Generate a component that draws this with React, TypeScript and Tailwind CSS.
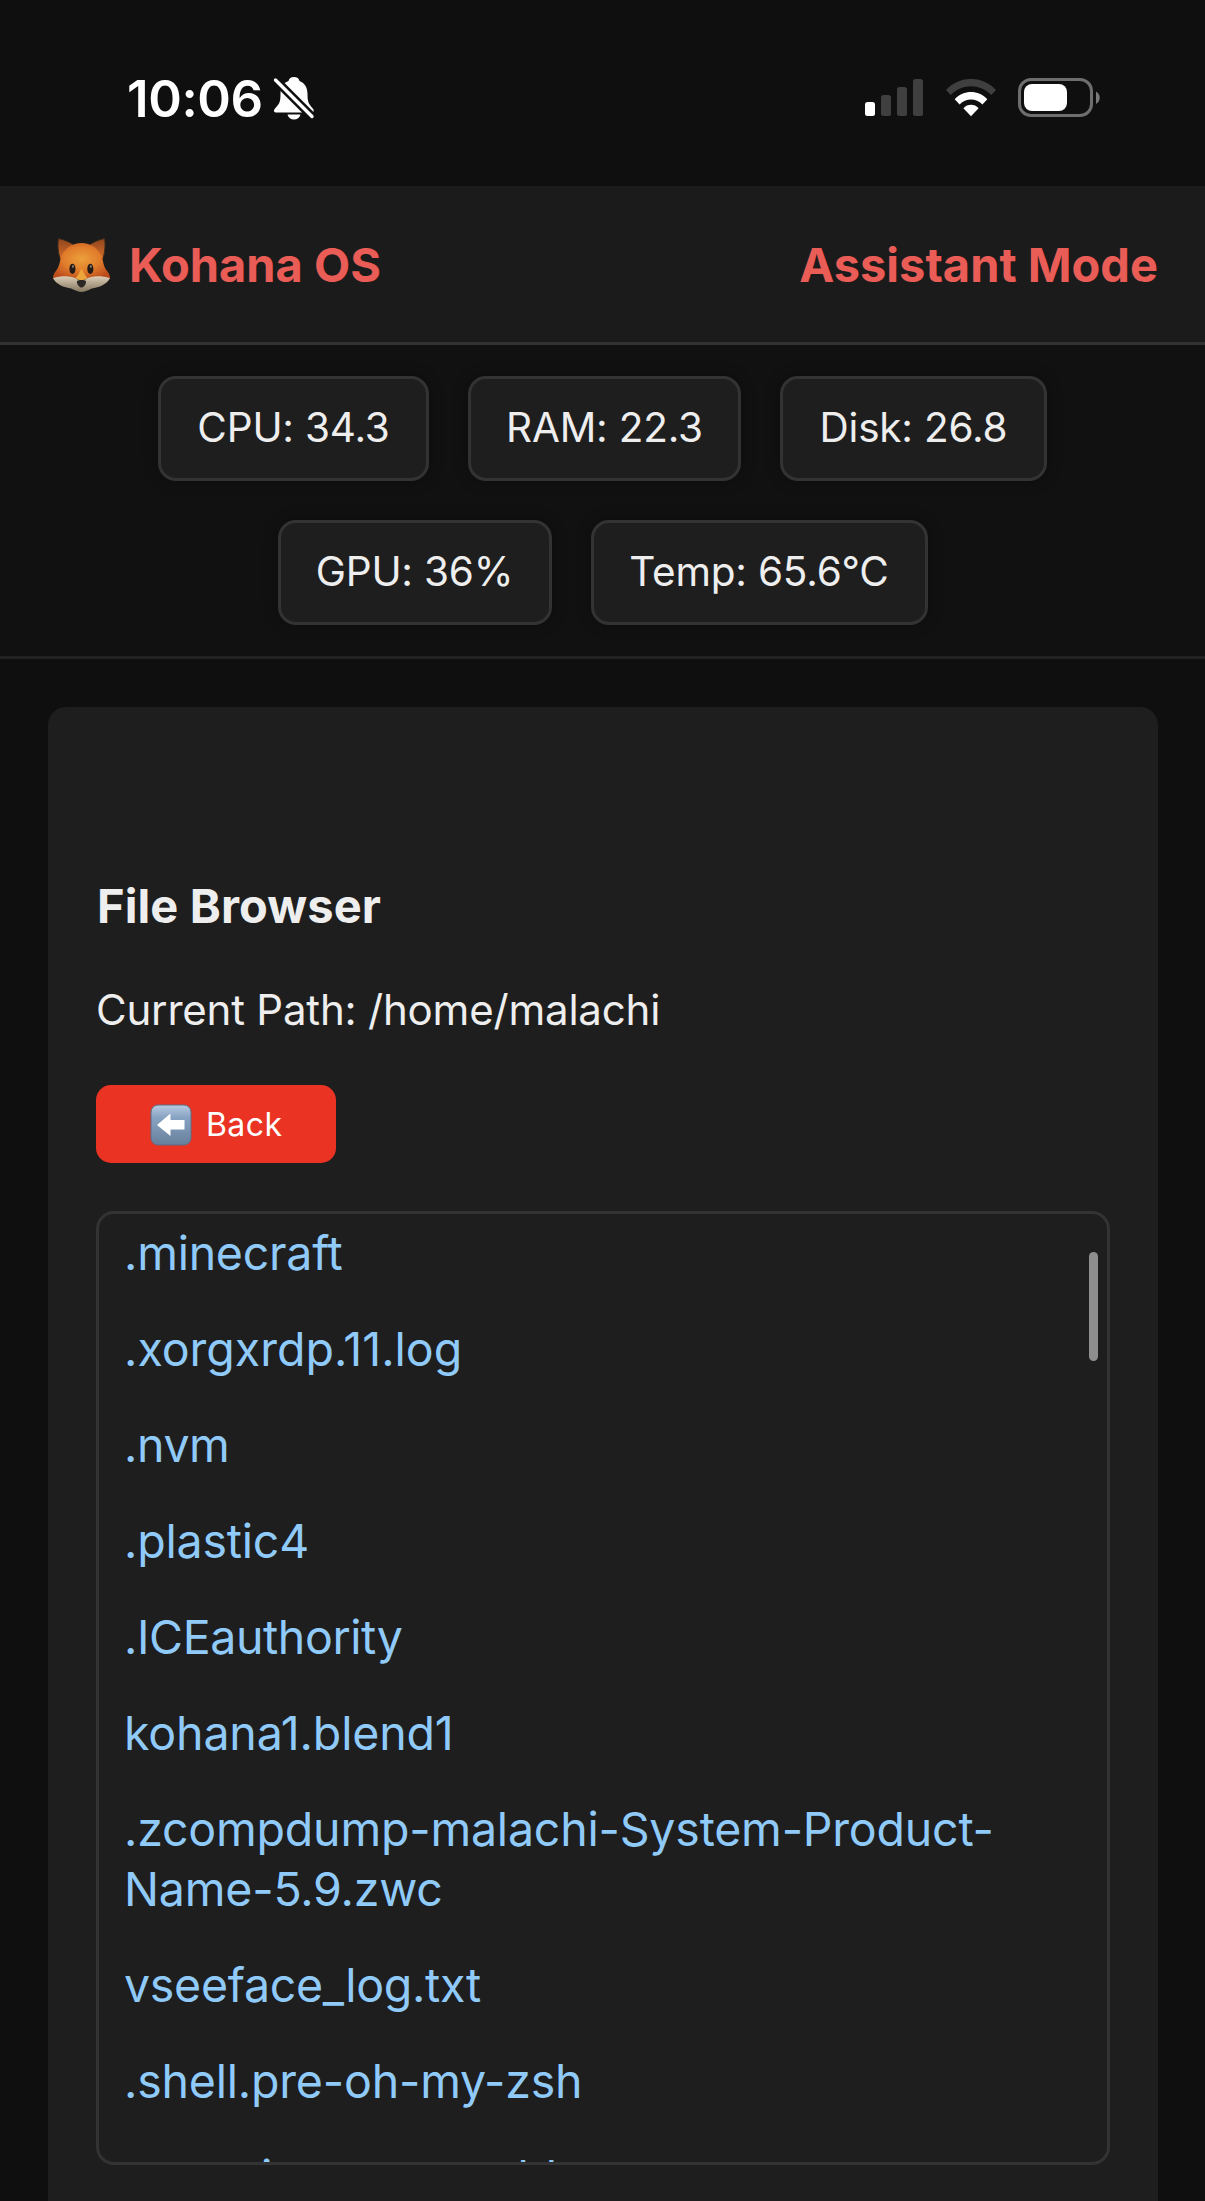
import React from "react";

const files = [
  { name: ".minecraft", tracking: "tracking-[-0.25px]" },
  { name: ".xorgxrdp.11.log", tracking: "tracking-[0px]" },
  { name: ".nvm", tracking: "tracking-[-0.4px]" },
  { name: ".plastic4", tracking: "tracking-[-0.2px]" },
  { name: ".ICEauthority", tracking: "tracking-[-0.4px]" },
  { name: "kohana1.blend1", tracking: "tracking-[-0.15px]" },
  { name: ".zcompdump-malachi-System-Product-Name-5.9.zwc", tracking: "tracking-[-0.2px]" },
  { name: "vseeface_log.txt", tracking: "tracking-[-0.3px]" },
  { name: ".shell.pre-oh-my-zsh", tracking: "tracking-[-0.2px]" },
  { name: ".xsession-errors.old", tracking: "tracking-[-0.4px]" },
];

const stats = [
  { text: "CPU: 34.3", width: "w-[271px]" },
  { text: "RAM: 22.3", width: "w-[273px]" },
  { text: "Disk: 26.8", width: "w-[267px]" },
  { text: "GPU: 36%", width: "w-[274px]" },
  { text: "Temp: 65.6°C", width: "w-[337px]" },
];

function BellOff() {
  return (
    <svg className="-mt-px ml-[10px] h-[44px] w-[42px]" viewBox="0 0 42 44">
      <path
        d="M21 1c-3 0-5 1.600-5.500 4C9.500 7 7.500 12 7.500 18c0 9-1.500 10-5.500 14.500-2 2.500-.8 4 1.500 4h35c2.300 0 3-2 1.300-4C36 28 34.500 27 34.500 18c0-6-2.500-11-8-13C26 2.600 24 1 21 1z"
        fill="#fff"
      />
      <path d="M14.500 38.500h13c-.8 3.200-3.500 5-6.500 5s-5.700-1.800-6.500-5z" fill="#fff" />
      <path d="M1 2.500 39 40.500" stroke="#0f0f0f" strokeWidth="8.500" strokeLinecap="butt" />
      <path d="M2.500 4 39 40.500" stroke="#fff" strokeWidth="3.400" strokeLinecap="round" />
    </svg>
  );
}

function Signal() {
  return (
    <svg className="h-[38px] w-[60px]" viewBox="0 0 60 38">
      <rect x="1" y="23" width="10" height="14" rx="2.500" fill="#fff" />
      <rect x="17" y="16" width="10" height="21" rx="2.500" fill="#3f3f3f" />
      <rect x="33" y="8" width="10" height="29" rx="2.500" fill="#3f3f3f" />
      <rect x="49" y="0" width="10" height="37" rx="2.500" fill="#3f3f3f" />
    </svg>
  );
}

function Wifi() {
  return (
    <svg className="h-[38px] w-[52px]" viewBox="0 0 52 38">
      <path d="M1 11C15-3.700 37-3.700 51 11L46.300 16C35 4.300 17 4.300 5.700 16z" fill="#3f3f3f" />
      <path d="M9.700 20.200c9-9.700 23.600-9.700 32.600 0L37.400 25.400c-6.300-6.500-16.500-6.500-22.800 0z" fill="#fff" />
      <path d="M18.400 29.200c4-4.600 11.200-4.600 15.200 0L26 37.200z" fill="#fff" />
    </svg>
  );
}

function Battery() {
  return (
    <svg className="h-[40px] w-[84px]" viewBox="0 0 84 40">
      <rect x="2.500" y="1.500" width="72" height="36" rx="11.500" fill="none" stroke="#6e6e6e" strokeWidth="3" />
      <rect x="7" y="6" width="43" height="27" rx="8" fill="#fff" />
      <path d="M79 13.500c5 2.500 5 10 0 12.500z" fill="#7a7a7a" />
    </svg>
  );
}

function Fox() {
  return (
    <svg className="mt-px h-[55px] w-[59px]" viewBox="0 0 60 56">
      <defs>
        <radialGradient id="face" cx="0.500" cy="0.450" r="0.600">
          <stop offset="0" stopColor="#eca03a" />
          <stop offset="0.550" stopColor="#e07c2b" />
          <stop offset="1" stopColor="#bd4c1c" />
        </radialGradient>
        <linearGradient id="ear" x1="0" y1="0" x2="0" y2="1">
          <stop offset="0" stopColor="#8f451d" />
          <stop offset="1" stopColor="#d9702a" />
        </linearGradient>
        <linearGradient id="muzzle" x1="0" y1="0" x2="0" y2="1">
          <stop offset="0" stopColor="#dccdb6" />
          <stop offset="1" stopColor="#857660" />
        </linearGradient>
      </defs>
      <path d="M6.500 1.500C13 3 19 5.500 23 9L9 24C6 17 5.500 8 6.500 1.500z" fill="url(#ear)" stroke="#3a2a1c" strokeWidth="1" />
      <path d="M53.500 1.500C47 3 41 5.500 37 9L51 24C54 17 54.500 8 53.500 1.500z" fill="url(#ear)" stroke="#3a2a1c" strokeWidth="1" />
      <path d="M30 6c10 0 18 6 21 15 1.500 6 2 10 5.500 14 2 2.500 2.500 5 2.500 7.500H1C1 40 1.500 37.500 3.500 35c3.500-4 4-8 5.500-14C12 12 20 6 30 6z" fill="url(#face)" />
      <path d="M1 42c9-3 19-2.500 24 .5 1.500 1 3 1.500 5 1.500s3.500-.5 5-1.500c5-3 15-3.500 24-.5-3 6-11 9.500-18.500 10.500C36 54.800 33 56 30 56s-6-1.200-10.500-3.500C12 51.500 4 48 1 42z" fill="url(#muzzle)" />
      <path d="M30 32c-2 4-3.500 7-6 9.500 2 2 4 2.500 6 2.500s4-.5 6-2.500c-2.500-2.500-4-5.500-6-9.500z" fill="#eda63c" />
      <path d="M25.500 45c1.500-1.500 7.500-1.500 9 0 1 2-2.500 6.500-4.500 6.500S24.500 47 25.500 45z" fill="#2b2724" />
      <ellipse cx="20.800" cy="32.500" rx="3.100" ry="5.200" fill="#241a16" />
      <ellipse cx="39" cy="32.500" rx="3.100" ry="5.200" fill="#241a16" />
      <ellipse cx="21.300" cy="30" rx="1" ry="1.500" fill="#8a7a70" />
      <ellipse cx="39.500" cy="30" rx="1" ry="1.500" fill="#8a7a70" />
    </svg>
  );
}

function BackArrow() {
  return (
    <svg className="mt-px h-[42px] w-[42px]" viewBox="0 0 42 42">
      <defs>
        <linearGradient id="key" x1="0" y1="0" x2="0" y2="1">
          <stop offset="0" stopColor="#b9cbe0" />
          <stop offset="0.300" stopColor="#89a4c4" />
          <stop offset="1" stopColor="#667f9b" />
        </linearGradient>
      </defs>
      <rect x="1" y="1" width="40" height="40" rx="7" fill="url(#key)" stroke="#5d6f86" strokeWidth="1" />
      <path d="M7 21 20.500 9.500V16H34.500v9.500H20.500V32z" fill="#fff" />
    </svg>
  );
}

export default function App() {
  return (
    <div className="flex h-[2201px] w-[1205px] flex-col overflow-hidden bg-[#0f0f0f] font-['Inter',sans-serif] text-[#eeeeee]">
      <div className="flex h-[186px] shrink-0 items-start justify-between pt-[76px] pr-[104px] pl-[127px]">
        <div className="flex h-[44px] items-center">
          <span className="pt-px text-[51px] leading-[44px] font-semibold tracking-[-0.4px] text-white">10:06</span>
          <BellOff />
        </div>
        <div className="flex items-start pt-[3px]">
          <Signal />
          <div className="ml-[21px]"><Wifi /></div>
          <div className="ml-[20px] -mt-px"><Battery /></div>
        </div>
      </div>

      <header className="flex h-[159px] shrink-0 items-center justify-between border-b-[3px] border-[#333333] bg-[#1b1b1b] px-[48px] text-[47px] font-bold text-[#ea5c56]">
        <div className="flex items-center">
          <div className="ml-[4px]"><Fox /></div>
          <span className="ml-[18px] pt-[3px]">Kohana OS</span>
        </div>
        <span className="-mr-px pt-[3px]">Assistant Mode</span>
      </header>

      <section className="flex h-[314px] shrink-0 flex-wrap content-start justify-center gap-x-[39px] gap-y-[39px] border-b-[3px] border-[#222222] bg-[#111111] px-[48px] pt-[31px]">
        {stats.map((s) => (
          <div
            key={s.text}
            className={`${s.width} flex h-[105px] items-center justify-center rounded-[18px] border-[3px] border-[#333333] bg-[#1e1e1e] text-[40.5px] tracking-[-0.2px] whitespace-nowrap shadow-[0_0_15px_rgba(0,0,0,0.3)]`}
          >
            {s.text}
          </div>
        ))}
      </section>

      <main className="mx-[48px] mt-[48px] h-[1600px] w-[1110px] shrink-0 rounded-t-[18px] bg-[#1e1e1e] px-[48px] pt-[170px]">
        <h3 className="ml-px text-[47px] leading-[58px] font-bold tracking-[0.1px]">File Browser</h3>
        <p className="mt-[49px] text-[42px] leading-[52px] tracking-[-0.2px]">Current Path: /home/malachi</p>
        <button className="mt-[49px] flex h-[78px] w-[240px] items-center rounded-[15px] bg-[#ea3323] pl-[54px] text-[32px] tracking-[0.4px] text-white">
          <BackArrow />
          <span className="ml-[14px] pt-px">Back</span>
        </button>
        <div className="relative mt-[48px] h-[954px] w-[1014px] overflow-hidden rounded-[18px] border-[3px] border-[#333333]">
          <ul className="pt-[9px] pl-[25px] text-[46.5px] leading-[60px] text-[#90caf9]">
            {files.map((f) => (
              <li key={f.name} className={`mb-[36px] w-[900px] ${f.tracking}`}>{f.name}</li>
            ))}
          </ul>
          <div className="absolute top-[38px] right-[9px] h-[109px] w-[9px] rounded-full bg-[#8e8e8e]" />
        </div>
      </main>
    </div>
  );
}
